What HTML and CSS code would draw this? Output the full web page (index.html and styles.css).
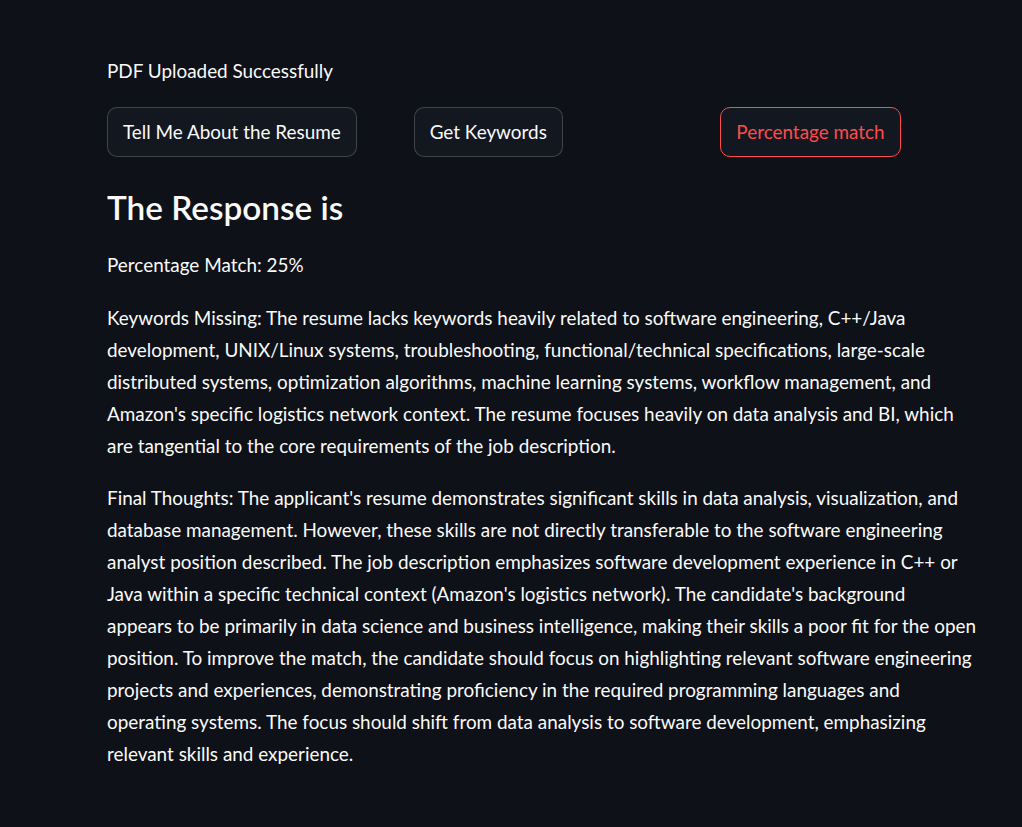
FILE: index.html
```html
<!DOCTYPE html>
<html lang="en">
<head>
<meta charset="utf-8">
<title>Resume ATS</title>
<link rel="stylesheet" href="styles.css">
</head>
<body>
<main class="block">
  <p class="status">PDF Uploaded Successfully</p>
  <div class="cols">
    <div class="col"><button class="btn">Tell Me About the Resume</button></div>
    <div class="col"><button class="btn">Get Keywords</button></div>
    <div class="col"><button class="btn active">Percentage match</button></div>
  </div>
  <h3 class="heading">The Response is</h3>
  <div class="response">
    <p class="first">Percentage Match: 25%</p>
    <p>Keywords Missing: The resume lacks keywords heavily related to software engineering, C++/Java<br>
    development, UNIX/Linux systems, troubleshooting, functional/technical specifications, large-scale<br>
    distributed systems, optimization algorithms, machine learning systems, workflow management, and<br>
    Amazon's specific logistics network context. The resume focuses heavily on data analysis and BI, which<br>
    are tangential to the core requirements of the job description.</p>
    <p>Final Thoughts: The applicant's resume demonstrates significant skills in data analysis, visualization, and<br>
    database management. However, these skills are not directly transferable to the software engineering<br>
    analyst position described. The job description emphasizes software development experience in C++ or<br>
    Java within a specific technical context (Amazon's logistics network). The candidate's background<br>
    appears to be primarily in data science and business intelligence, making their skills a poor fit for the open<br>
    position. To improve the match, the candidate should focus on highlighting relevant software engineering<br>
    projects and experiences, demonstrating proficiency in the required programming languages and<br>
    operating systems. The focus should shift from data analysis to software development, emphasizing<br>
    relevant skills and experience.</p>
  </div>
</main>
</body>
</html>
```
FILE: styles.css
```css
html, body {
  margin: 0;
  padding: 0;
  background: #0e1117;
  color: #fafafa;
  font-family: "Lato", "Noto Sans", sans-serif;
  font-size: 18.9px;
  line-height: 32px;
}

.block {
  width: 890px;
  margin-left: 107px;
  padding-top: 55px;
  display: flex;
  flex-direction: column;
}

.status {
  margin: 0;
}

.cols {
  display: grid;
  grid-template-columns: repeat(3, 1fr);
  column-gap: 40px;
  width: 880px;
  margin-top: 20px;
}

.btn {
  font: inherit;
  color: #fafafa;
  background: #131720;
  border: 1px solid rgba(250, 250, 250, 0.2);
  border-radius: 10px;
  height: 50px;
  padding: 0 15px;
  line-height: 32px;
  cursor: pointer;
}

.btn.active {
  color: #ff4b4b;
  border-color: #ff4b4b;
}

.heading {
  margin: 29px 0 0;
  font-size: 33.3px;
  line-height: 42px;
  font-weight: 600;
}

.response {
  margin-top: 21px;
}

.response p {
  margin: 0 0 20px;
}

.response p.first {
  margin-bottom: 21px;
}
```
